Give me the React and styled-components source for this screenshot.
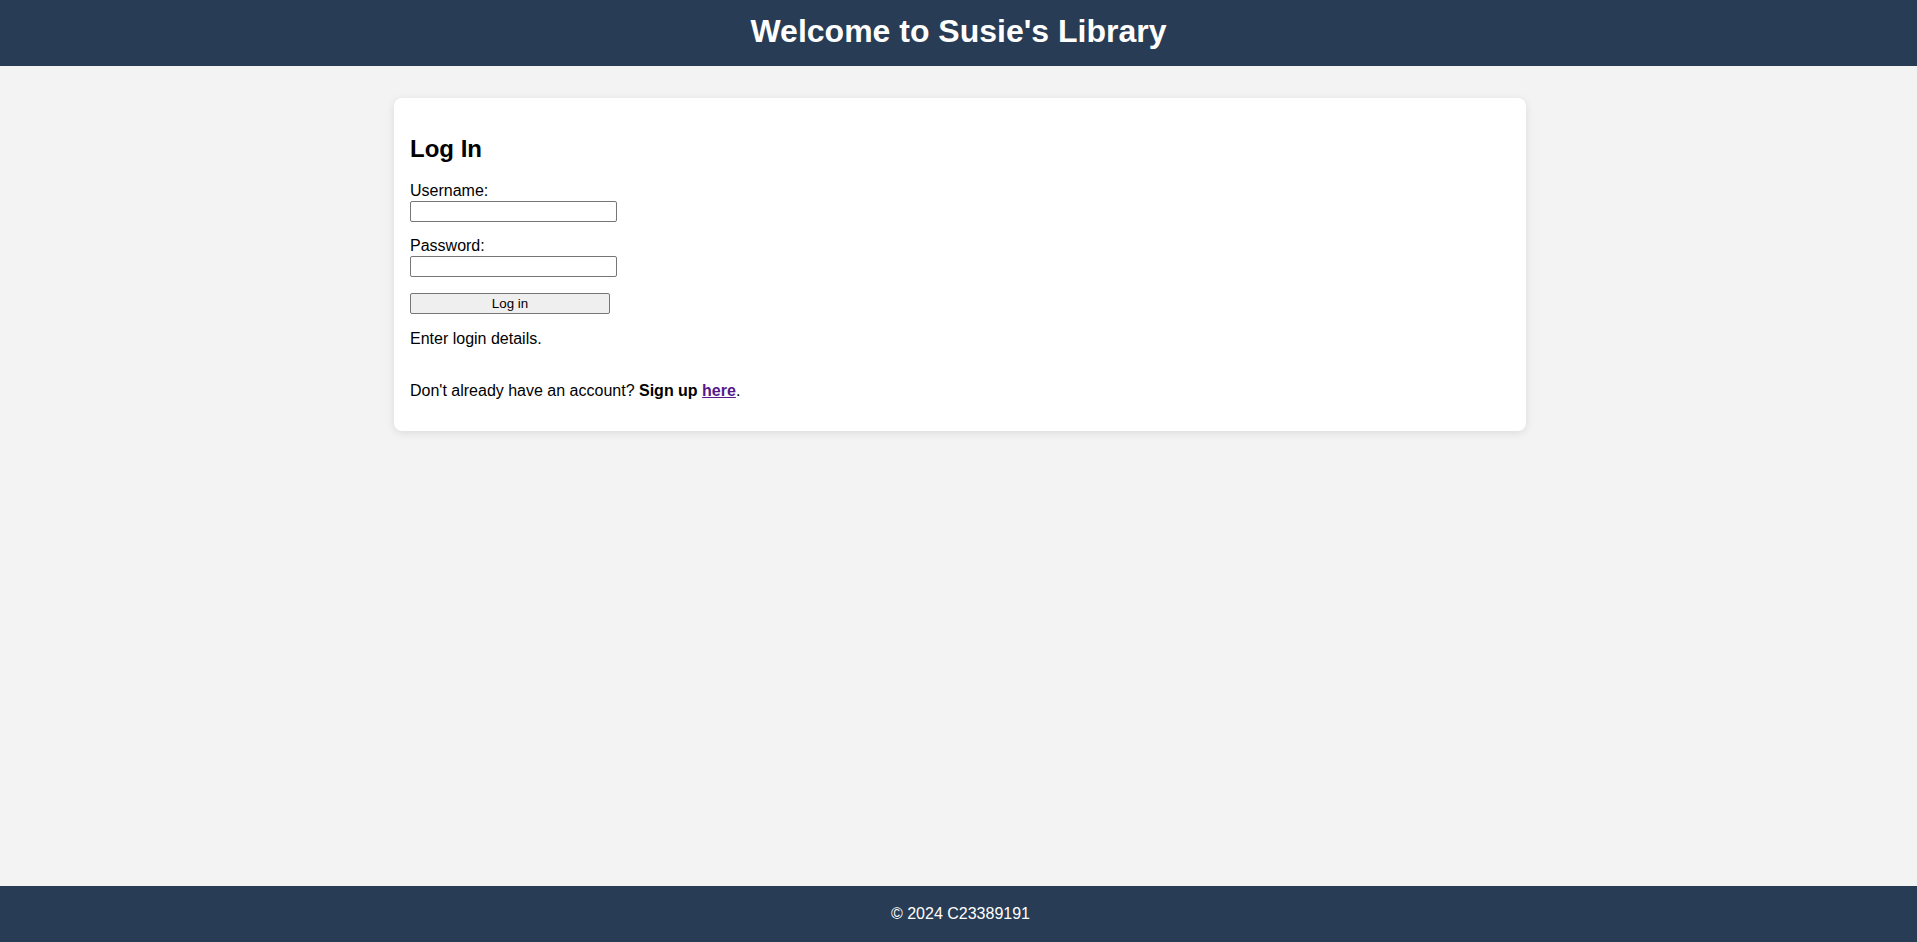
import React from "react";
import styled, { createGlobalStyle } from "styled-components";

const GlobalStyle = createGlobalStyle`
  html, body {
    margin: 0;
    padding: 0;
  }
  body {
    font-family: "Liberation Sans", Arial, sans-serif;
    background: #f3f3f3;
    color: #000;
  }
`;

const Page = styled.div`
  min-height: 100vh;
  display: flex;
  flex-direction: column;
`;

const Header = styled.header`
  background: #293c55;
  color: #fff;
  height: 66px;
  box-sizing: border-box;
  padding-top: 13px;
  text-align: center;
`;

const Title = styled.h1`
  margin: 0;
  font-size: 32px;
  font-weight: bold;
  line-height: 37px;
`;

const Main = styled.main`
  flex: 1;
  padding-top: 32px;
  display: flex;
  justify-content: center;
  align-items: flex-start;
`;

const Card = styled.section`
  width: 1100px;
  padding: 16px;
  background: #fff;
  border-radius: 8px;
  box-shadow: 0 2px 8px rgba(0, 0, 0, 0.1);
  margin-left: 3px;
`;

const Heading = styled.h2`
  font-size: 24px;
  font-weight: bold;
  margin: 21px 0 20px;
  line-height: 27px;
`;

const Form = styled.form`
  display: flex;
  flex-direction: column;
  align-items: flex-start;
`;

const Field = styled.div`
  display: flex;
  flex-direction: column;
  align-items: flex-start;
  margin-bottom: ${(p) => p.$gap || 15}px;
`;

const Label = styled.label`
  font-size: 16px;
  line-height: 18px;
  margin-bottom: 1px;
`;

const Input = styled.input`
  width: 207px;
  height: 21px;
  box-sizing: border-box;
  border: 1px solid #767676;
  border-radius: 2px;
  padding: 1px 2px;
  font: 13.33px "Liberation Sans", Arial, sans-serif;
  background: #fff;
`;

const Button = styled.button`
  width: 200px;
  height: 21px;
  box-sizing: border-box;
  border: 1px solid #767676;
  border-radius: 2px;
  background: #efefef;
  font: 13.33px "Liberation Sans", Arial, sans-serif;
  color: #000;
  padding: 0;
  cursor: pointer;
`;

const Text = styled.p`
  font-size: 16px;
  line-height: 18px;
  margin: ${(p) => p.$top || 16}px 0 ${(p) => p.$bottom || 16}px;
`;

const Link = styled.a`
  color: #551a8b;
  font-weight: bold;
  text-decoration: underline;
`;

const Footer = styled.footer`
  background: #293c55;
  color: #fff;
  height: 56px;
  display: flex;
  align-items: center;
  justify-content: center;
  font-size: 16px;
  padding-left: 4px;
`;

export default function App() {
  return (
    <Page>
      <GlobalStyle />
      <Header>
        <Title>Welcome to Susie's Library</Title>
      </Header>
      <Main>
        <Card>
          <Heading>Log In</Heading>
          <Form onSubmit={(e) => e.preventDefault()}>
            <Field $gap={15}>
              <Label htmlFor="username">Username:</Label>
              <Input id="username" type="text" />
            </Field>
            <Field $gap={16}>
              <Label htmlFor="password">Password:</Label>
              <Input id="password" type="password" />
            </Field>
            <Button type="submit">Log in</Button>
          </Form>
          <Text>Enter login details.</Text>
          <Text $top={34} $bottom={15}>
            Don't already have an account? <b>Sign up</b>{" "}
            <Link href="#signup">here</Link>.
          </Text>
        </Card>
      </Main>
      <Footer>© 2024 C23389191</Footer>
    </Page>
  );
}
